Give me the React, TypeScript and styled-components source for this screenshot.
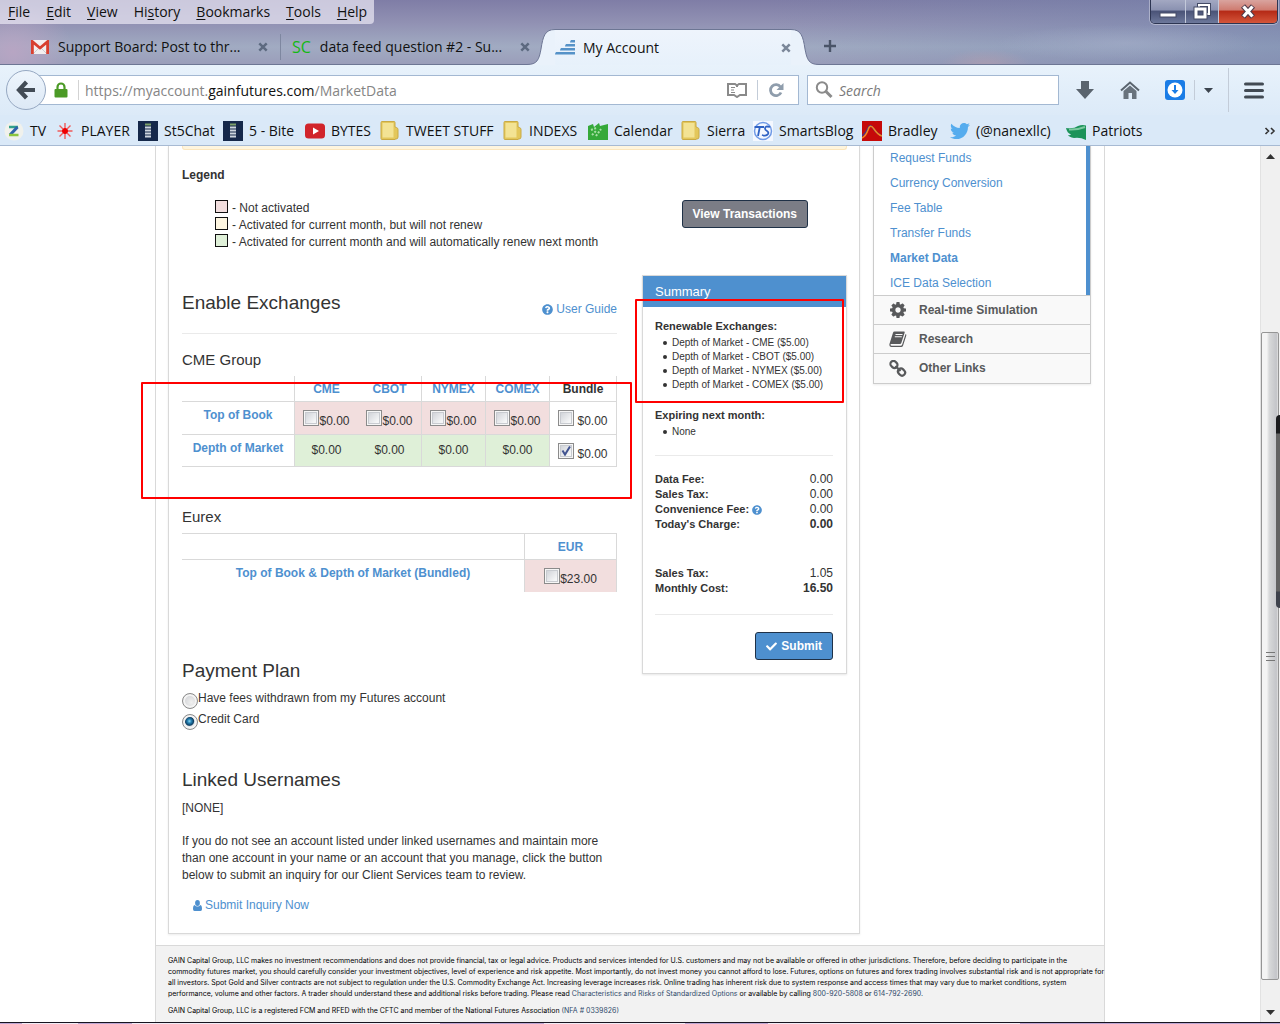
import React, { useState } from "react";
import styled, { createGlobalStyle, css } from "styled-components";
import { FaCheck, FaQuestionCircle, FaTwitter } from "react-icons/fa";

const blue = "#4e90cf";
const line = "#d9d9d9";
const uiFont = `"Open Sans", "Noto Sans", sans-serif`;
const pageFont = `"Liberation Sans", Arial, sans-serif`;

const Global = createGlobalStyle`
  *, *::before, *::after { box-sizing: border-box; }
  body { margin: 0; background: #fff; }
  h1, h2, h3, p, ul { margin: 0; padding: 0; font-weight: normal; }
  button, input { font: inherit; }
`;

/* ---------- browser window ---------- */

const Window = styled.div`
  display: flex;
  flex-direction: column;
  height: 100vh;
  overflow: hidden;
  font-family: ${uiFont};
  font-size: 14px;
  color: #111;
`;

const TitleArea = styled.header`
  display: flex;
  flex-direction: column;
  flex: none;
  height: 65px;
  background:
    radial-gradient(ellipse 60px 50px at 1% 80%, #b7a5c3 0%, transparent 100%),
    radial-gradient(ellipse 45px 16px at 77% 100%, #b79fae99 0%, transparent 100%),
    radial-gradient(ellipse 130px 18px at 88% 66%, #a9b2cc80 0%, transparent 100%),
    linear-gradient(90deg, #b8accd00 60%, #7184ac80 100%),
    linear-gradient(180deg, #7f7da6 0%, #9191b3 35%, #a1abc2 72%, #9a9db9 100%);
`;

const TitleRow = styled.div`
  display: flex;
  justify-content: space-between;
  align-items: flex-start;
  height: 29px;
`;

const MenuBar = styled.nav`
  display: flex;
  align-items: center;
  height: 24px;
  padding: 0 7px 0 8px;
  gap: 16px;
  background: rgba(233, 230, 242, 0.72);
  border-radius: 0 0 4px 0;
`;

const MenuButton = styled.button`
  border: 0;
  padding: 0;
  background: none;
  color: #111;
  line-height: 22px;
  u { text-underline-offset: 2px; }
`;

const WindowButtons = styled.div`
  display: flex;
  height: 24px;
  margin-right: 2px;
  border: 1px solid #2d3552;
  border-top: 0;
  border-radius: 0 0 5px 5px;
  overflow: hidden;
  box-shadow: 0 0 0 1px rgba(255, 255, 255, 0.35);
`;

const WindowButton = styled.button<{ $w: number; $danger?: boolean }>`
  display: grid;
  place-items: center;
  width: ${(p) => p.$w}px;
  padding: 0;
  border: 0;
  border-right: 1px solid ${(p) => (p.$danger ? "transparent" : "#c3c9da")};
  background: ${(p) =>
    p.$danger
      ? "linear-gradient(180deg, #d9a49f 0%, #cf7d72 42%, #b62b17 50%, #d4553a 100%)"
      : "linear-gradient(180deg, #a3a8c2 0%, #8b92b1 42%, #4b5478 50%, #6d789b 100%)"};
`;

const TabStrip = styled.div`
  display: flex;
  align-items: flex-end;
  height: 36px;
  padding-left: 20px;
  border-bottom: 1px solid #6d7694;
`;

const Tab = styled.div<{ $w: number; $divider?: boolean }>`
  display: flex;
  align-items: center;
  flex: none;
  width: ${(p) => p.$w}px;
  height: 26px;
  margin-bottom: 4px;
  padding: 0 12px 0 11px;
  gap: 9px;
  border-right: 1px solid ${(p) => (p.$divider ? "#7e87a0" : "transparent")};
`;

const ChartMark = styled.span`
  color: #14b814;
  font-size: 16px;
  line-height: 20px;
`;

const ActiveTab = styled.div`
  display: flex;
  flex: none;
  height: 36px;
  margin: 0 0 -1px -16px;
`;

const ActiveTabBody = styled.div`
  display: flex;
  align-items: center;
  width: 236px;
  gap: 8px;
  background: linear-gradient(180deg, #eef4fc, #e7f1fb);
  border-top: 1px solid #6d7694;
  svg { flex: none; }
`;

const TabTitle = styled.span`
  flex: 1;
  min-width: 0;
  white-space: nowrap;
  line-height: 20px;
`;

const PlainButton = styled.button`
  display: grid;
  place-items: center;
  flex: none;
  padding: 0;
  border: 0;
  background: none;
`;

const NewTab = styled(PlainButton)`
  width: 22px;
  height: 36px;
`;

const NavBar = styled.div`
  display: flex;
  align-items: center;
  flex: none;
  height: 50px;
  padding: 0 16px 0 6px;
  background: linear-gradient(180deg, #e8f2fb, #dceaf8);
`;

const BackButton = styled(PlainButton)`
  width: 40px;
  height: 40px;
  z-index: 1;
  border: 1px solid #96a8c2;
  border-radius: 50%;
  background: linear-gradient(180deg, #eef5fc, #dde9f6);
`;

const field = css`
  display: flex;
  align-items: center;
  height: 30px;
  background: #fff;
  border: 1px solid #a3b8d2;
`;

const AddressBar = styled.div`
  ${field}
  flex: 1;
  min-width: 0;
  margin-left: -9px;
  padding: 0 12px 0 16px;
`;

const Address = styled.div`
  flex: 1;
  overflow: hidden;
  white-space: nowrap;
  color: #858585;
  outline: 0;
  b { font-weight: normal; color: #111; }
`;

const VSep = styled.span<{ $h?: number; $gap: number }>`
  flex: none;
  width: 1px;
  height: ${(p) => p.$h ?? 20}px;
  margin: 0 ${(p) => p.$gap}px;
  background: #c3ccd8;
`;

const Divider = styled.span`
  flex: none;
  width: 1px;
  height: 20px;
  margin: 0 6px 0 10px;
  background: #d3d3d3;
`;

const SearchBox = styled.label`
  ${field}
  width: 252px;
  margin: 0 17px 0 8px;
  padding: 0 6px;
  gap: 5px;
  input {
    flex: 1;
    min-width: 0;
    padding: 0;
    border: 0;
    outline: 0;
    background: none;
  }
  input::placeholder { color: #7a7a7a; font-style: italic; opacity: 1; }
`;

const Tools = styled.div`
  display: flex;
  align-items: center;
  flex: none;
`;

const Tool = styled(PlainButton)<{ $mr?: number }>`
  height: 30px;
  margin-right: ${(p) => p.$mr ?? 0}px;
`;

const BookmarksBar = styled.nav`
  display: flex;
  align-items: center;
  flex: none;
  height: 31px;
  padding: 1px 4px 0;
  gap: 7px;
  background: #dae9f8;
  border-bottom: 1px solid #a7bad3;
`;

const Bookmark = styled.a<{ $w: number }>`
  display: flex;
  align-items: center;
  flex: none;
  width: ${(p) => p.$w}px;
  gap: 6px;
  color: #111;
  text-decoration: none;
  white-space: nowrap;
  line-height: 20px;
  svg { flex: none; }
`;

const More = styled(PlainButton)`
  margin-left: auto;
`;

/* ---------- page ---------- */

const Viewport = styled.div`
  display: flex;
  flex: 1;
  min-height: 0;
  font-family: ${pageFont};
  font-size: 12px;
  line-height: 17px;
  color: #333;
`;

const Scroller = styled.div`
  display: flex;
  justify-content: center;
  flex: 1;
  min-width: 0;
  overflow: hidden;
`;

const Container = styled.div`
  display: flex;
  flex-direction: column;
  width: 100%;
  max-width: 950px;
  border: solid ${line};
  border-width: 0 1px;
`;

const Columns = styled.div`
  display: grid;
  grid-template-columns: minmax(0, 1fr) 218px;
  align-items: start;
  gap: 13px;
  padding: 0 13px 11px 12px;
`;

const Panel = styled.main`
  padding: 0 12px 17px 13px;
  border: 1px solid ${line};
  border-top: 0;
  box-shadow: 0 1px 2px rgba(0, 0, 0, 0.08);
`;

const AlertEdge = styled.div`
  height: 4px;
  background: #fef5de;
  border: 1px solid #fbe6bd;
  border-top: 0;
  border-radius: 0 0 3px 3px;
`;

const LegendTitle = styled.p`
  margin-top: 17px;
  font-weight: bold;
`;

const LegendRow = styled.div`
  display: flex;
  justify-content: space-between;
  align-items: flex-start;
  margin-top: 16px;
  padding: 0 39px 0 33px;
`;

const LegendList = styled.ul`
  list-style: none;
  li { display: flex; gap: 4px; line-height: 17px; height: 17px; }
`;

const Swatch = styled.span<{ $color: string }>`
  width: 13px;
  height: 13px;
  border: 1px solid #111;
  background: ${(p) => p.$color};
`;

const ActionButton = styled.button<{ $color: string }>`
  display: inline-flex;
  align-items: center;
  justify-content: center;
  height: 28px;
  padding: 0 10px;
  gap: 4px;
  border: 1px solid #1f3147;
  border-radius: 3px;
  background: ${(p) => p.$color};
  color: #fff;
  font-weight: bold;
  line-height: 16px;
`;

const Split = styled.div`
  display: grid;
  grid-template-columns: minmax(0, 1fr) 205px;
  align-items: start;
  gap: 25px;
  margin-top: 24px;
`;

const SectionHead = styled.div`
  display: flex;
  justify-content: space-between;
  align-items: flex-end;
  height: 59px;
  padding-bottom: 16px;
  border-bottom: 1px solid #eaeaea;
`;

const Title = styled.h2<{ $mt?: number }>`
  margin-top: ${(p) => p.$mt ?? 0}px;
  font-size: 19px;
  line-height: 28px;
`;

const Subtitle = styled.h3`
  font-size: 15px;
  line-height: 20px;
`;

const Link = styled.a`
  display: inline-flex;
  align-items: center;
  gap: 3px;
  color: ${blue};
  line-height: 16px;
  text-decoration: none;
`;

const Group = styled.section<{ $mt: number }>`
  position: relative;
  margin-top: ${(p) => p.$mt}px;
`;

const Table = styled.table<{ $top?: boolean }>`
  width: 100%;
  margin-top: 6px;
  table-layout: fixed;
  border-collapse: separate;
  border-spacing: 0;
  border-top: ${(p) => (p.$top ? `1px solid ${line}` : "0")};
  th, td { padding: 0; text-align: center; vertical-align: middle; }
  thead th { height: 26px; padding-top: 2px; }
`;

const Cell = styled.td<{ $bg?: string; $edge?: boolean; $last?: boolean; $h?: number }>`
  height: ${(p) => p.$h ?? 33}px;
  background: ${(p) => p.$bg ?? "transparent"};
  border-right: ${(p) => (p.$edge ? `1px solid ${line}` : "0")};
  border-bottom: ${(p) => (p.$last ? "0" : `1px solid ${line}`)};
  color: #333;
`;

const RowHead = styled(Cell).attrs({ as: "th", scope: "row" })`
  && { padding-top: 5px; vertical-align: top; color: ${blue}; }
`;

const ColHead = styled(Cell).attrs({ as: "th", scope: "col" })<{ $plain?: boolean }>`
  color: ${(p) => (p.$plain ? "#333" : blue)};
`;

const Choice = styled.label<{ $gap?: number }>`
  display: inline-flex;
  align-items: flex-start;
  gap: ${(p) => p.$gap ?? 0}px;
  vertical-align: middle;
  line-height: 23px;
  height: 16px;
`;

const Check = styled.input.attrs({ type: "checkbox" })`
  appearance: none;
  flex: none;
  width: 16px;
  height: 16px;
  margin: 0;
  border: 1px solid #8b8b8b;
  background: linear-gradient(135deg, #c9ccd2, #f5f6f7 75%);
  box-shadow: inset 0 0 0 1px #f6f6f6, inset 0 0 0 2px #c8cbd0;
  &:checked {
    background:
      url("data:image/svg+xml,%3Csvg xmlns='http://www.w3.org/2000/svg' viewBox='0 0 14 14'%3E%3Cpath d='M3.5 6.5 6 10.5 11 2.5' fill='none' stroke='%23415390' stroke-width='2'/%3E%3C/svg%3E"),
      linear-gradient(135deg, #c9ccd2, #f5f6f7 75%);
  }
`;

const Plans = styled.div`
  margin-top: 3px;
`;

const RadioRow = styled.label`
  display: flex;
  align-items: flex-start;
  height: 21px;
  line-height: 20px;
`;

const Radio = styled.input.attrs({ type: "radio" })`
  appearance: none;
  flex: none;
  width: 16px;
  height: 16px;
  margin: 5px 0 0;
  border: 1px solid #8b8b8b;
  border-radius: 50%;
  background: radial-gradient(circle at 60% 60%, #f0f0f0, #c6c8cc);
  box-shadow: inset 0 0 0 2px #f4f4f4;
  &:checked {
    background: radial-gradient(circle at 46% 44%, #8fd8f5 0, #2683b4 18%, #0f3f63 38%, #dfe3e6 48%);
  }
`;

const Mark = styled.span<{ $t: number; $l: number; $r: number; $h: number }>`
  position: absolute;
  top: ${(p) => p.$t}px;
  left: ${(p) => p.$l}px;
  right: ${(p) => p.$r}px;
  height: ${(p) => p.$h}px;
  border: 2px solid #ff0000;
  border-radius: 1px;
  pointer-events: none;
  z-index: 1;
`;

const Summary = styled.aside`
  position: relative;
  border: 1px solid ${line};
  box-shadow: 0 1px 2px rgba(0, 0, 0, 0.1);
  font-size: 11px;
  line-height: 15px;
`;

const SummaryHead = styled.h3`
  padding: 1px 12px 0;
  background: ${blue};
  color: #fff;
  font-size: 13px;
  line-height: 30px;
`;

const SummaryBody = styled.div`
  padding: 12px 13px 13px 12px;
`;

const SummaryList = styled.ul<{ $mb: number }>`
  margin: 2px 0 ${(p) => p.$mb}px;
  padding-left: 17px;
  font-size: 10px;
  line-height: 14px;
  list-style: none;
  li::before {
    content: "";
    float: left;
    width: 4px;
    height: 4px;
    margin: 5px 0 0 -9px;
    border-radius: 50%;
    background: #333;
  }
`;

const Fees = styled.dl<{ $mb: number }>`
  margin: 0 0 ${(p) => p.$mb}px;
`;

const Fee = styled.div<{ $strong?: boolean }>`
  display: flex;
  justify-content: space-between;
  dt { display: flex; align-items: center; gap: 3px; font-weight: bold; }
  dd { margin: 0; font-size: 12px; font-weight: ${(p) => (p.$strong ? "bold" : "normal")}; }
  svg { color: ${blue}; }
`;

const Rule = styled.hr<{ $mb: number }>`
  height: 1px;
  margin: 0 0 ${(p) => p.$mb}px;
  border: 0;
  background: #eaeaea;
`;

const SubmitRow = styled.div`
  display: flex;
  justify-content: flex-end;
  font-size: 12px;
`;

const Para = styled.p<{ $mt: number }>`
  margin-top: ${(p) => p.$mt}px;
`;

const Inquiry = styled.p`
  margin: 13px 0 0 11px;
  line-height: 18px;
`;

const Sidebar = styled.nav`
  border: 1px solid #cccccc;
  border-top: 0;
  box-shadow: 0 1px 2px rgba(0, 0, 0, 0.08);
`;

const SubMenu = styled.div`
  display: flex;
  flex-direction: column;
  height: 149px;
  border-right: 4px solid ${blue};
  padding: 0 16px;
`;

const SubLink = styled.a<{ $active?: boolean }>`
  color: ${blue};
  font-weight: ${(p) => (p.$active ? "bold" : "normal")};
  line-height: 25px;
  text-decoration: none;
`;

const SideItem = styled.a`
  display: flex;
  align-items: center;
  height: 29px;
  padding-left: 15px;
  gap: 12px;
  border-top: 1px solid #cccccc;
  background: #f9f9f9;
  color: #58595b;
  font-weight: bold;
  text-decoration: none;
  &:last-child { height: 30px; }
`;

const Footer = styled.footer`
  flex: 1;
  padding: 9px 12px;
  border-top: 1px solid ${line};
  background: #f2f2f2;
  color: #000;
  font-family: Inter, "Liberation Sans", sans-serif;
  font-size: 7px;
  line-height: 11px;
  white-space: nowrap;
  p + p { margin-top: 6px; }
  a { color: #2f4a6b; text-decoration: none; }
`;

const Scrollbar = styled.div`
  display: flex;
  flex-direction: column;
  align-items: center;
  flex: none;
  width: 20px;
  position: relative;
  background: #f0f0f0;
  border-left: 1px solid #e2e2e2;
`;

const ArrowButton = styled(PlainButton)`
  width: 100%;
  height: 20px;
`;

const Track = styled.div`
  flex: 1;
  width: 100%;
  padding-top: 166px;
`;

const Thumb = styled.div`
  display: grid;
  place-items: center;
  width: 18px;
  height: calc(100% - 22px);
  border: 1px solid #959595;
  border-radius: 2px;
  background: linear-gradient(90deg, #f4f4f4 0 30%, #d8d9da 45%, #c4c5c9 90%, #e2e2e2);
`;

const EdgeTab = styled.span`
  position: absolute;
  top: 269px;
  right: 0;
  width: 4px;
  height: 193px;
  border-radius: 4px 0 0 4px;
  background: linear-gradient(180deg, #1b1c1e 0 18px, #636363 19px 176px, #3e424c 177px);
`;

const Taskbar = styled.div`
  flex: none;
  height: 2px;
  border-top: 1px solid #17131f;
  background: linear-gradient(90deg, #bda6d3 0 22px, #f1ecf6 22px 78px, #bda6d3 78px 132px, #f1ecf6 132px 440px, #bda6d3 440px 544px, #f1ecf6 544px 685px, #bda6d3 685px 768px, #f1ecf6 768px 1020px, #bda6d3 1020px);
`;

/* ---------- icons ---------- */

const CloseX = ({ color = "#5d6a80" }) => (
  <svg width="10" height="10" viewBox="0 0 10 10">
    <path d="M1.3 1.3 8.7 8.7M8.7 1.3 1.3 8.7" stroke={color} strokeWidth="2.5" />
  </svg>
);

const Gmail = () => (
  <svg width="18" height="14" viewBox="0 0 18 14">
    <rect width="18" height="14" rx="1" fill="#f3f0f0" />
    <path d="M3 13 9 7l6 6" fill="none" stroke="#ccc" />
    <path d="M1.4 14V1.6L9 8l7.6-6.4V14" fill="none" stroke="#d8402f" strokeWidth="2.8" />
  </svg>
);

const Stairs = () => (
  <svg width="20" height="15" viewBox="0 0 20 15" fill="#5592c8">
    <path d="M16 0h4v2.500h-5q0-1.500 1-2.500zM11 4h9v2.500H10q0-1.500 1-2.500zM6 8h14v2.500H5Q5 9 6 8zM1 12h19v2.500H0Q0 13 1 12z" />
  </svg>
);

const Folder = () => (
  <svg width="20" height="20" viewBox="0 0 20 20">
    <path d="M1 1.500Q1 .5 2 .5h12q1 0 1 1V6l1.500.5q1.500.5 1.500 2V16q0 2-2 2h-1v.5H2q-1 0-1-1z" fill="#e3c75b" stroke="#c9aa45" />
    <path d="M2.500 2h11v14.500h-11z" fill="#f3e394" />
  </svg>
);

const Tower = () => (
  <svg width="20" height="20" viewBox="0 0 20 20">
    <rect width="20" height="20" fill="#15284a" />
    <path d="M7 2.500h6v2H7z" fill="#7da06a" />
    <path d="M7 5.500h6v2H7zM7 8.500h6v2H7zM7 11.500h6v2H7zM7 14.500h6v2H7z" fill="#cdd5de" />
  </svg>
);

const Zed = () => (
  <svg width="20" height="20" viewBox="0 0 20 20">
    <circle cx="10" cy="10" r="9.500" fill="#f0f1ec" />
    <path d="M5 6h9" stroke="#31a08b" strokeWidth="2.500" />
    <path d="M13.500 6 6 14" stroke="#2f62ab" strokeWidth="3" />
    <path d="M5 14h9.500" stroke="#8cc63f" strokeWidth="2.500" />
  </svg>
);

const Burst = () => (
  <svg width="20" height="20" viewBox="0 0 20 20" stroke="#f05a5a">
    <path d="M10 2v16M2.500 10h15M4.500 4.500l11 11M15.500 4.500l-11 11" strokeWidth="1.400" />
    <circle cx="10" cy="10" r="2.500" fill="#e00" stroke="#e00" />
  </svg>
);

const Tube = () => (
  <svg width="20" height="20" viewBox="0 0 20 20">
    <rect y="2.500" width="20" height="15" rx="3.500" fill="#d1242b" />
    <path d="m8 6.500 6 3.500-6 3.500z" fill="#fff" />
  </svg>
);

const Factory = () => (
  <svg width="20" height="20" viewBox="0 0 20 20">
    <path d="M0 5 5 3l1 3 5-4 1 3 8-2v16H0z" fill="#35a93a" />
    <path d="M4 14 9 9M8 15l5-7M3 9l5-2" stroke="#a9dfa5" strokeWidth="2" strokeDasharray="2 1.500" />
  </svg>
);

const Initials = () => (
  <svg width="20" height="20" viewBox="0 0 20 20">
    <rect width="20" height="20" fill="#f4f8ff" />
    <circle cx="10" cy="10" r="8.500" fill="none" stroke="#6f9ae6" strokeWidth="1.500" />
    <path d="M1.500 6H11M6.800 6 5 15M17 6q-5-1.500-5 1.500 0 1.500 2 2.500 2 1.200 1 3-1.500 2.500-6 1" fill="none" stroke="#2f62c4" strokeWidth="1.800" />
  </svg>
);

const Peak = () => (
  <svg width="20" height="20" viewBox="0 0 20 20">
    <rect width="20" height="20" fill="#c60909" />
    <path d="M0 15q4-3 6-8t5 0 9 8" fill="none" stroke="#49307e" strokeWidth="1.500" />
    <path d="M0 17q4-2 6-8 2-7 6-1 4 6 8 7" fill="none" stroke="#f08a24" strokeWidth="1.500" />
  </svg>
);

const Flag = () => (
  <svg width="20" height="20" viewBox="0 0 20 20">
    <path d="M0 7q8 1 12-2 4-1.500 8-.5V19q-6-3-12-2-5-1-6-3 2 .5 3-.5Q1 12 0 7z" fill="#1c935a" />
    <path d="M3 8.500q8 .5 16-2.500" fill="none" stroke="#7cc9a0" strokeWidth="2" />
  </svg>
);

const Gear = () => (
  <svg width="18" height="16" viewBox="-96 -128 1728 1536" fill="#58595b">
    <path d="M1024 640q0-106-75-181t-181-75-181 75-75 181 75 181 181 75 181-75 75-181zm512-109v222q0 12-8 23t-20 13l-185 28q-19 54-39 91 35 50 107 138 10 12 10 25t-9 23q-27 37-99 108t-94 71q-12 0-26-9l-138-108q-44 23-91 38-16 136-29 186-7 28-36 28h-222q-14 0-24.500-8.500t-11.500-21.500l-28-184q-49-16-90-37l-141 107q-10 9-25 9-14 0-25-11-126-114-165-168-7-10-7-23 0-12 8-23 15-21 51-66.500t54-70.500q-27-50-41-99l-183-27q-13-2-21-12.500t-8-23.500v-222q0-12 8-23t19-13l186-28q14-46 39-92-40-57-107-138-10-12-10-24 0-10 9-23 26-36 98.500-107.500t94.500-71.500q13 0 26 10l138 107q44-23 91-38 16-136 29-186 7-28 36-28h222q14 0 24.500 8.500t11.500 21.500l28 184q49 16 90 37l142-107q9-9 24-9 13 0 25 10 129 119 165 170 7 8 7 22 0 12-8 23-15 21-51 66.500t-54 70.500q26 50 41 98l183 28q13 2 21 12.500t8 23.500z" />
  </svg>
);

const Book = () => (
  <svg width="18" height="16" viewBox="0 0 18 16">
    <path d="M5.500.5H15q1 0 .7 1L12.300 12q-.3 1-1.300 1H2.300q-1 0-.8 1 .2.800 1.200.8h9q1 0 1.400-1L16.600 3q1 .4.700 1.400l-3.200 10q-.5 1.600-2 1.600H2.300Q.6 16 .4 14.300q-.1-1 .2-1.800L4 1.700Q4.300.5 5.500.5z" fill="#58595b" />
    <path d="M6.500 3.500h7M5.800 5.800h7" stroke="#f9f9f9" strokeWidth="1.100" />
  </svg>
);

const Chain = () => (
  <svg width="18" height="18" viewBox="0 0 18 18" fill="none" stroke="#58595b" strokeWidth="2.200">
    <rect x="1.200" y="1.500" width="7.500" height="6" rx="3" transform="rotate(45 5 4.500)" />
    <rect x="8.800" y="9" width="7.500" height="6" rx="3" transform="rotate(45 12.500 12)" />
    <path d="m6.500 6 5 5" />
  </svg>
);

const Person = () => (
  <svg width="9" height="11" viewBox="0 0 9 11" fill={blue}>
    <ellipse cx="4.500" cy="3" rx="2.400" ry="3" />
    <path d="M1.500 5Q4.500 8 7.500 5 9 5.500 9 9q0 2-1.500 2h-6Q0 11 0 9q0-3.500 1.500-4z" />
  </svg>
);

const bookmarks: { label: string; w: number; icon: React.ReactNode }[] = [
  { label: "TV", w: 44, icon: <Zed /> },
  { label: "PLAYER", w: 76, icon: <Burst /> },
  { label: "St5Chat", w: 78, icon: <Tower /> },
  { label: "5 - Bite", w: 75, icon: <Tower /> },
  { label: "BYTES", w: 68, icon: <Tube /> },
  { label: "TWEET STUFF", w: 116, icon: <Folder /> },
  { label: "INDEXS", w: 78, icon: <Folder /> },
  { label: "Calendar", w: 86, icon: <Factory /> },
  { label: "Sierra", w: 65, icon: <Folder /> },
  { label: "SmartsBlog", w: 102, icon: <Initials /> },
  { label: "Bradley", w: 81, icon: <Peak /> },
  { label: "(@nanexllc)", w: 109, icon: <FaTwitter size={20} color="#55acee" /> },
  { label: "Patriots", w: 80, icon: <Flag /> },
];

const menus: [string, string, string][] = [
  ["", "F", "ile"],
  ["", "E", "dit"],
  ["", "V", "iew"],
  ["Hi", "s", "tory"],
  ["", "B", "ookmarks"],
  ["", "T", "ools"],
  ["", "H", "elp"],
];

const pink = "#f2dede";
const green = "#dff0d8";
const exchanges = ["CME", "CBOT", "NYMEX", "COMEX"];
const hasEdge = (name: string) => name !== "CME";

function Chrome() {
  return (
    <>
      <TitleArea>
        <TitleRow>
          <MenuBar>
            {menus.map(([a, k, b]) => (
              <MenuButton key={a + k + b}>
                {a}
                <u>{k}</u>
                {b}
              </MenuButton>
            ))}
          </MenuBar>
          <WindowButtons>
            <WindowButton $w={35} aria-label="Minimize">
              <svg width="18" height="14" viewBox="0 0 18 14">
                <rect x="1" y="8" width="16" height="4" fill="#fff" stroke="#444b66" />
              </svg>
            </WindowButton>
            <WindowButton $w={33} aria-label="Restore">
              <svg width="18" height="17" viewBox="0 0 18 17" fill="none">
                <path d="M6 5V2h10v9h-3" stroke="#444b66" strokeWidth="4" />
                <path d="M6 4V2h10v9h-3" stroke="#fff" strokeWidth="2" />
                <rect x="3" y="6" width="9" height="8" stroke="#444b66" strokeWidth="5" />
                <rect x="3" y="6" width="9" height="8" stroke="#fff" strokeWidth="3" />
              </svg>
            </WindowButton>
            <WindowButton $w={58} $danger aria-label="Close">
              <svg width="18" height="15" viewBox="0 0 18 15">
                <path d="m4 2 10 11M14 2 4 13" stroke="#4f3b4b" strokeWidth="5.500" />
                <path d="m4.500 2.500 9 10M13.500 2.500l-9 10" stroke="#fff" strokeWidth="3.300" />
              </svg>
            </WindowButton>
          </WindowButtons>
        </TitleRow>
        <TabStrip>
          <Tab $w={261} $divider>
            <Gmail />
            <TabTitle>Support Board: Post to thr...</TabTitle>
            <PlainButton aria-label="Close tab">
              <CloseX />
            </PlainButton>
          </Tab>
          <Tab $w={262}>
            <ChartMark>SC</ChartMark>
            <TabTitle>data feed question #2 - Su...</TabTitle>
            <PlainButton aria-label="Close tab">
              <CloseX />
            </PlainButton>
          </Tab>
          <ActiveTab>
            <svg width="28" height="36" viewBox="0 0 28 36">
              <path d="M0 36V35.500C10 35.500 12 31 14 20 16 7 18 .5 28 .5V36z" fill="#eaf2fb" />
              <path d="M0 35.500C10 35.500 12 31 14 20 16 7 18 .5 28 .5" fill="none" stroke="#6d7694" />
            </svg>
            <ActiveTabBody>
              <Stairs />
              <TabTitle>My Account</TabTitle>
              <PlainButton aria-label="Close tab">
                <CloseX color="#7b8799" />
              </PlainButton>
            </ActiveTabBody>
            <svg width="28" height="36" viewBox="0 0 28 36">
              <path d="M28 36V35.500C18 35.500 16 31 14 20 12 7 10 .5 0 .5V36z" fill="#eaf2fb" />
              <path d="M28 35.500C18 35.500 16 31 14 20 12 7 10 .5 0 .5" fill="none" stroke="#6d7694" />
            </svg>
          </ActiveTab>
          <NewTab aria-label="New tab">
            <svg width="14" height="14" viewBox="0 0 14 14">
              <path d="M7 1v12M1 7h12" stroke="#4a5468" strokeWidth="2.400" />
            </svg>
          </NewTab>
        </TabStrip>
      </TitleArea>
      <NavBar>
        <BackButton aria-label="Back">
          <svg width="20" height="20" viewBox="0 0 20 20">
            <path d="M10.500 2 3 10l7.500 8M3.500 10H19" fill="none" stroke="#434c56" strokeWidth="4.200" />
          </svg>
        </BackButton>
        <AddressBar>
          <svg width="14" height="16" viewBox="0 0 14 16">
            <path d="M3.500 8V5a3.500 3.500 0 0 1 7 0v3" fill="none" stroke="#4b9a26" strokeWidth="2.200" />
            <rect x=".5" y="7" width="13" height="8.500" rx="1" fill="#4b9a26" />
          </svg>
          <Divider />
          <Address role="textbox" aria-label="Address" contentEditable suppressContentEditableWarning spellCheck={false}>
            https://myaccount.<b>gainfutures.com</b>/MarketData
          </Address>
          <PlainButton aria-label="Reader view">
            <svg width="20" height="16" viewBox="0 0 20 16" fill="none" stroke="#8a8a8a" strokeWidth="2">
              <path d="M1 2h7l2 1.500L12 2h7v11h-6l-3 2-3-2H1z" />
              <path d="M4 5.500h4M4 8h3M4 10.500h4" strokeWidth="1.200" />
              <path d="M10 3v2" />
            </svg>
          </PlainButton>
          <VSep $gap={10} />
          <PlainButton aria-label="Reload">
            <svg width="18" height="16" viewBox="0 0 18 16">
              <path d="M13 10.500a5.500 5.500 0 1 1-.5-5.500" fill="none" stroke="#8f9dac" strokeWidth="2.800" />
              <path d="M15.500 1v7H8.500z" fill="#8f9dac" />
            </svg>
          </PlainButton>
        </AddressBar>
        <SearchBox>
          <svg width="20" height="20" viewBox="0 0 20 20" fill="none" stroke="#8b8b8b">
            <circle cx="8" cy="7.500" r="5.200" strokeWidth="2" />
            <path d="m12 11.500 5.500 5.500" strokeWidth="3" />
          </svg>
          <input type="text" placeholder="Search" aria-label="Search" />
        </SearchBox>
        <Tools>
          <Tool $mr={26} aria-label="Downloads">
            <svg width="18" height="18" viewBox="0 0 18 18">
              <path d="M5 0h8v8h5l-9 10L0 8h5z" fill="#5a646e" />
            </svg>
          </Tool>
          <Tool $mr={25} aria-label="Home">
            <svg width="20" height="18" viewBox="0 0 20 18">
              <path d="M1 9.500 10 1.500l9 8" fill="none" stroke="#5a646e" strokeWidth="2" />
              <path d="M3.500 10 10 4.500 16.500 10v8H12v-6H8.500v6h-5z" fill="#69737d" />
            </svg>
          </Tool>
          <Tool aria-label="Remote session">
            <svg width="20" height="20" viewBox="0 0 20 20">
              <rect width="20" height="20" rx="3" fill="#1a7ce6" />
              <circle cx="10" cy="10" r="7.500" fill="#fff" />
              <path d="M9 5h2v5h2.500L10 14l-3.500-4H9z" fill="#1a7ce6" />
            </svg>
          </Tool>
          <VSep $gap={9} />
          <Tool aria-label="More options">
            <svg width="9" height="5" viewBox="0 0 9 5">
              <path d="M0 0h9L4.500 5z" fill="#3c444e" />
            </svg>
          </Tool>
          <VSep $gap={15} $h={44} />
          <Tool aria-label="Menu">
            <svg width="20" height="17" viewBox="0 0 20 17" stroke="#424a53" strokeWidth="3" strokeLinecap="round">
              <path d="M1.500 2h17M1.500 8.500h17M1.500 15h17" />
            </svg>
          </Tool>
        </Tools>
      </NavBar>
      <BookmarksBar>
        {bookmarks.map((b) => (
          <Bookmark key={b.label} href="#" $w={b.w}>
            {b.icon}
            {b.label}
          </Bookmark>
        ))}
        <More aria-label="More bookmarks">
          <svg width="12" height="8" viewBox="0 0 12 8" fill="none" stroke="#333" strokeWidth="1.600">
            <path d="m1.500 1 3 3-3 3M7 1l3 3-3 3" />
          </svg>
        </More>
      </BookmarksBar>
    </>
  );
}

function SummaryPanel() {
  return (
    <Summary>
      <SummaryHead>Summary</SummaryHead>
      <SummaryBody>
        <b>Renewable Exchanges:</b>
        <SummaryList $mb={16}>
          {exchanges.map((e) => (
            <li key={e}>Depth of Market - {e} ($5.00)</li>
          ))}
        </SummaryList>
        <b>Expiring next month:</b>
        <SummaryList $mb={16}>
          <li>None</li>
        </SummaryList>
        <Rule $mb={16} />
        <Fees $mb={34}>
          <Fee><dt>Data Fee:</dt><dd>0.00</dd></Fee>
          <Fee><dt>Sales Tax:</dt><dd>0.00</dd></Fee>
          <Fee><dt>Convenience Fee: <FaQuestionCircle size={10} /></dt><dd>0.00</dd></Fee>
          <Fee $strong><dt>Today's Charge:</dt><dd>0.00</dd></Fee>
        </Fees>
        <Fees $mb={18}>
          <Fee><dt>Sales Tax:</dt><dd>1.05</dd></Fee>
          <Fee $strong><dt>Monthly Cost:</dt><dd>16.50</dd></Fee>
        </Fees>
        <Rule $mb={17} />
        <SubmitRow>
          <ActionButton $color={blue}>
            <FaCheck size={11} /> Submit
          </ActionButton>
        </SubmitRow>
      </SummaryBody>
      <Mark $t={23} $l={-8} $r={2} $h={104} />
    </Summary>
  );
}

function MarketData() {
  const [bundle, setBundle] = useState(true);
  const [plan, setPlan] = useState("card");
  return (
    <Panel>
      <AlertEdge />
      <LegendTitle>Legend</LegendTitle>
      <LegendRow>
        <LegendList>
          <li><Swatch $color={pink} />- Not activated</li>
          <li><Swatch $color="#fef6e1" />- Activated for current month, but will not renew</li>
          <li><Swatch $color={green} />- Activated for current month and will automatically renew next month</li>
        </LegendList>
        <ActionButton $color="#7b7d86">View Transactions</ActionButton>
      </LegendRow>
      <Split>
        <div>
          <SectionHead>
            <Title>Enable Exchanges</Title>
            <Link href="#"><FaQuestionCircle size={11} />User Guide</Link>
          </SectionHead>
          <Group $mt={16}>
            <Subtitle>CME Group</Subtitle>
            <Table>
              <colgroup>
                <col width="113" />
                <col width="63" />
                <col width="64" />
                <col width="64" />
                <col width="64" />
                <col />
              </colgroup>
              <thead>
                <tr>
                  <ColHead $edge $h={26} aria-label="Data type" />
                  {exchanges.map((e) => (
                    <ColHead key={e} $edge={hasEdge(e)} $h={26}>{e}</ColHead>
                  ))}
                  <ColHead $plain $edge $h={26}>Bundle</ColHead>
                </tr>
              </thead>
              <tbody>
                <tr>
                  <RowHead $edge>Top of Book</RowHead>
                  {exchanges.map((e) => (
                    <Cell key={e} $edge={hasEdge(e)} $bg={pink}>
                      <Choice><Check />$0.00</Choice>
                    </Cell>
                  ))}
                  <Cell $edge><Choice $gap={3}><Check />$0.00</Choice></Cell>
                </tr>
                <tr>
                  <RowHead $edge $h={32}>Depth of Market</RowHead>
                  {exchanges.map((e) => (
                    <Cell key={e} $edge={hasEdge(e)} $bg={green} $h={32}>$0.00</Cell>
                  ))}
                  <Cell $edge $h={32}>
                    <Choice $gap={3}>
                      <Check checked={bundle} onChange={() => setBundle(!bundle)} />$0.00
                    </Choice>
                  </Cell>
                </tr>
              </tbody>
            </Table>
            <Mark $t={32} $l={-41} $r={-15} $h={117} />
          </Group>
          <Group $mt={40}>
            <Subtitle>Eurex</Subtitle>
            <Table $top>
              <colgroup>
                <col />
                <col width="92" />
              </colgroup>
              <thead>
                <tr>
                  <ColHead $edge $h={26} aria-label="Data type" />
                  <ColHead $edge $h={26}>EUR</ColHead>
                </tr>
              </thead>
              <tbody>
                <tr>
                  <RowHead $edge $last $h={32}>Top of Book &amp; Depth of Market (Bundled)</RowHead>
                  <Cell $last $edge $bg={pink} $h={32}><Choice><Check />$23.00</Choice></Cell>
                </tr>
              </tbody>
            </Table>
          </Group>
          <Title $mt={65}>Payment Plan</Title>
          <Plans>
            <RadioRow>
              <Radio name="plan" checked={plan === "futures"} onChange={() => setPlan("futures")} />
              Have fees withdrawn from my Futures account
            </RadioRow>
            <RadioRow>
              <Radio name="plan" checked={plan === "card"} onChange={() => setPlan("card")} />
              Credit Card
            </RadioRow>
          </Plans>
          <Title $mt={36}>Linked Usernames</Title>
          <Para $mt={6}>[NONE]</Para>
          <Para $mt={16}>
            If you do not see an account listed under linked usernames and maintain more than one
            account in your name or an account that you manage, click the button below to submit an
            inquiry for our Client Services team to review.
          </Para>
          <Inquiry><Link href="#"><Person />Submit Inquiry Now</Link></Inquiry>
        </div>
        <SummaryPanel />
      </Split>
    </Panel>
  );
}

export default function App() {
  return (
    <Window>
      <Global />
      <Chrome />
      <Viewport>
        <Scroller>
          <Container>
            <Columns>
              <MarketData />
              <Sidebar>
                <SubMenu>
                  <SubLink href="#">Request Funds</SubLink>
                  <SubLink href="#">Currency Conversion</SubLink>
                  <SubLink href="#">Fee Table</SubLink>
                  <SubLink href="#">Transfer Funds</SubLink>
                  <SubLink href="#" $active>Market Data</SubLink>
                  <SubLink href="#">ICE Data Selection</SubLink>
                </SubMenu>
                <SideItem href="#"><Gear />Real-time Simulation</SideItem>
                <SideItem href="#"><Book />Research</SideItem>
                <SideItem href="#"><Chain />Other Links</SideItem>
              </Sidebar>
            </Columns>
            <Footer>
              <p>
                GAIN Capital Group, LLC makes no investment recommendations and does not provide financial, tax or legal advice. Products and services intended for U.S. customers and may not be available or offered in other jurisdictions. Therefore, before deciding to participate in the<br />
                commodity futures market, you should carefully consider your investment objectives, level of experience and risk appetite. Most importantly, do not invest money you cannot afford to lose. Futures, options on futures and forex trading involves substantial risk and is not appropriate for<br />
                all investors. Spot Gold and Silver contracts are not subject to regulation under the U.S. Commodity Exchange Act. Increasing leverage increases risk. Online trading has inherent risk due to system response and access times that may vary due to market conditions, system<br />
                performance, volume and other factors. A trader should understand these and additional risks before trading. Please read <a href="#">Characteristics and Risks of Standardized Options</a> or available by calling <a href="#">800-920-5808</a> or <a href="#">614-792-2690.</a>
              </p>
              <p>
                GAIN Capital Group, LLC is a registered FCM and RFED with the CFTC and member of the National Futures Association <a href="#">(NFA # 0339826)</a>
              </p>
            </Footer>
          </Container>
        </Scroller>
        <Scrollbar>
          <ArrowButton aria-label="Scroll up">
            <svg width="9" height="5" viewBox="0 0 9 5"><path d="M0 5h9L4.500 0z" fill="#333" /></svg>
          </ArrowButton>
          <Track>
            <Thumb>
              <svg width="9" height="9" viewBox="0 0 9 9" stroke="#777"><path d="M0 .5h9M0 4.500h9M0 8.500h9" /></svg>
            </Thumb>
          </Track>
          <ArrowButton aria-label="Scroll down">
            <svg width="9" height="5" viewBox="0 0 9 5"><path d="M0 0h9L4.500 5z" fill="#333" /></svg>
          </ArrowButton>
          <EdgeTab />
        </Scrollbar>
      </Viewport>
      <Taskbar />
    </Window>
  );
}
